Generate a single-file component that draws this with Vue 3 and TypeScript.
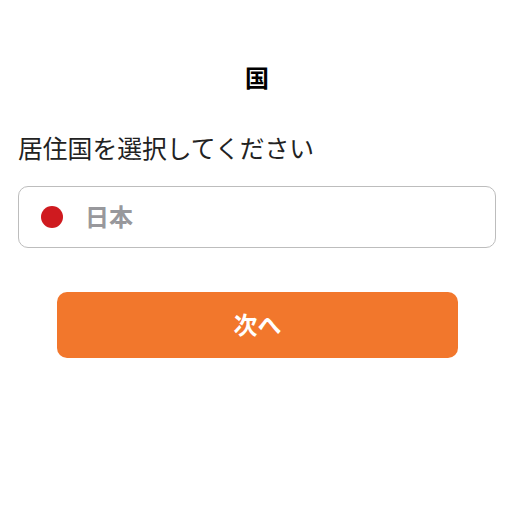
<script setup lang="ts">
const title: string = '国'
</script>

<template>
  <main class="page">
    <h1 class="title">{{ title }}</h1>
    <p class="label">居住国を選択してください</p>
    <div class="field">
      <span class="flag"></span>
      <span class="country">日本</span>
    </div>
    <button class="next" type="button">次へ</button>
  </main>
</template>

<style scoped>
.page {
  width: 512px;
  height: 519px;
  box-sizing: border-box;
  padding: 64px 16px 0 18px;
  background: #fff;
  font-family: "Noto Sans CJK JP", sans-serif;
  display: flex;
  flex-direction: column;
}
.title {
  margin: 0;
  text-align: center;
  font-size: 24px;
  line-height: 26px;
  font-weight: 700;
  color: #000;
}
.label {
  margin: 40px 0 0;
  font-size: 24.8px;
  line-height: 34px;
  color: #222;
}
.field {
  margin-top: 22px;
  height: 62px;
  box-sizing: border-box;
  border: 1px solid #bdbdbd;
  border-radius: 10px;
  display: flex;
  align-items: center;
  padding-left: 22px;
}
.flag {
  width: 22px;
  height: 22px;
  border-radius: 50%;
  background: #cf1a1f;
}
.country {
  margin-left: 22px;
  padding-bottom: 4px;
  font-size: 24px;
  font-weight: 700;
  color: #98989c;
}
.next {
  margin: 44px 0 0 39px;
  width: 401px;
  height: 66px;
  padding: 0 0 3px;
  border: 0;
  border-radius: 10px;
  background: #f2772c;
  color: #fff;
  font-family: inherit;
  font-size: 24px;
  font-weight: 700;
}
</style>
